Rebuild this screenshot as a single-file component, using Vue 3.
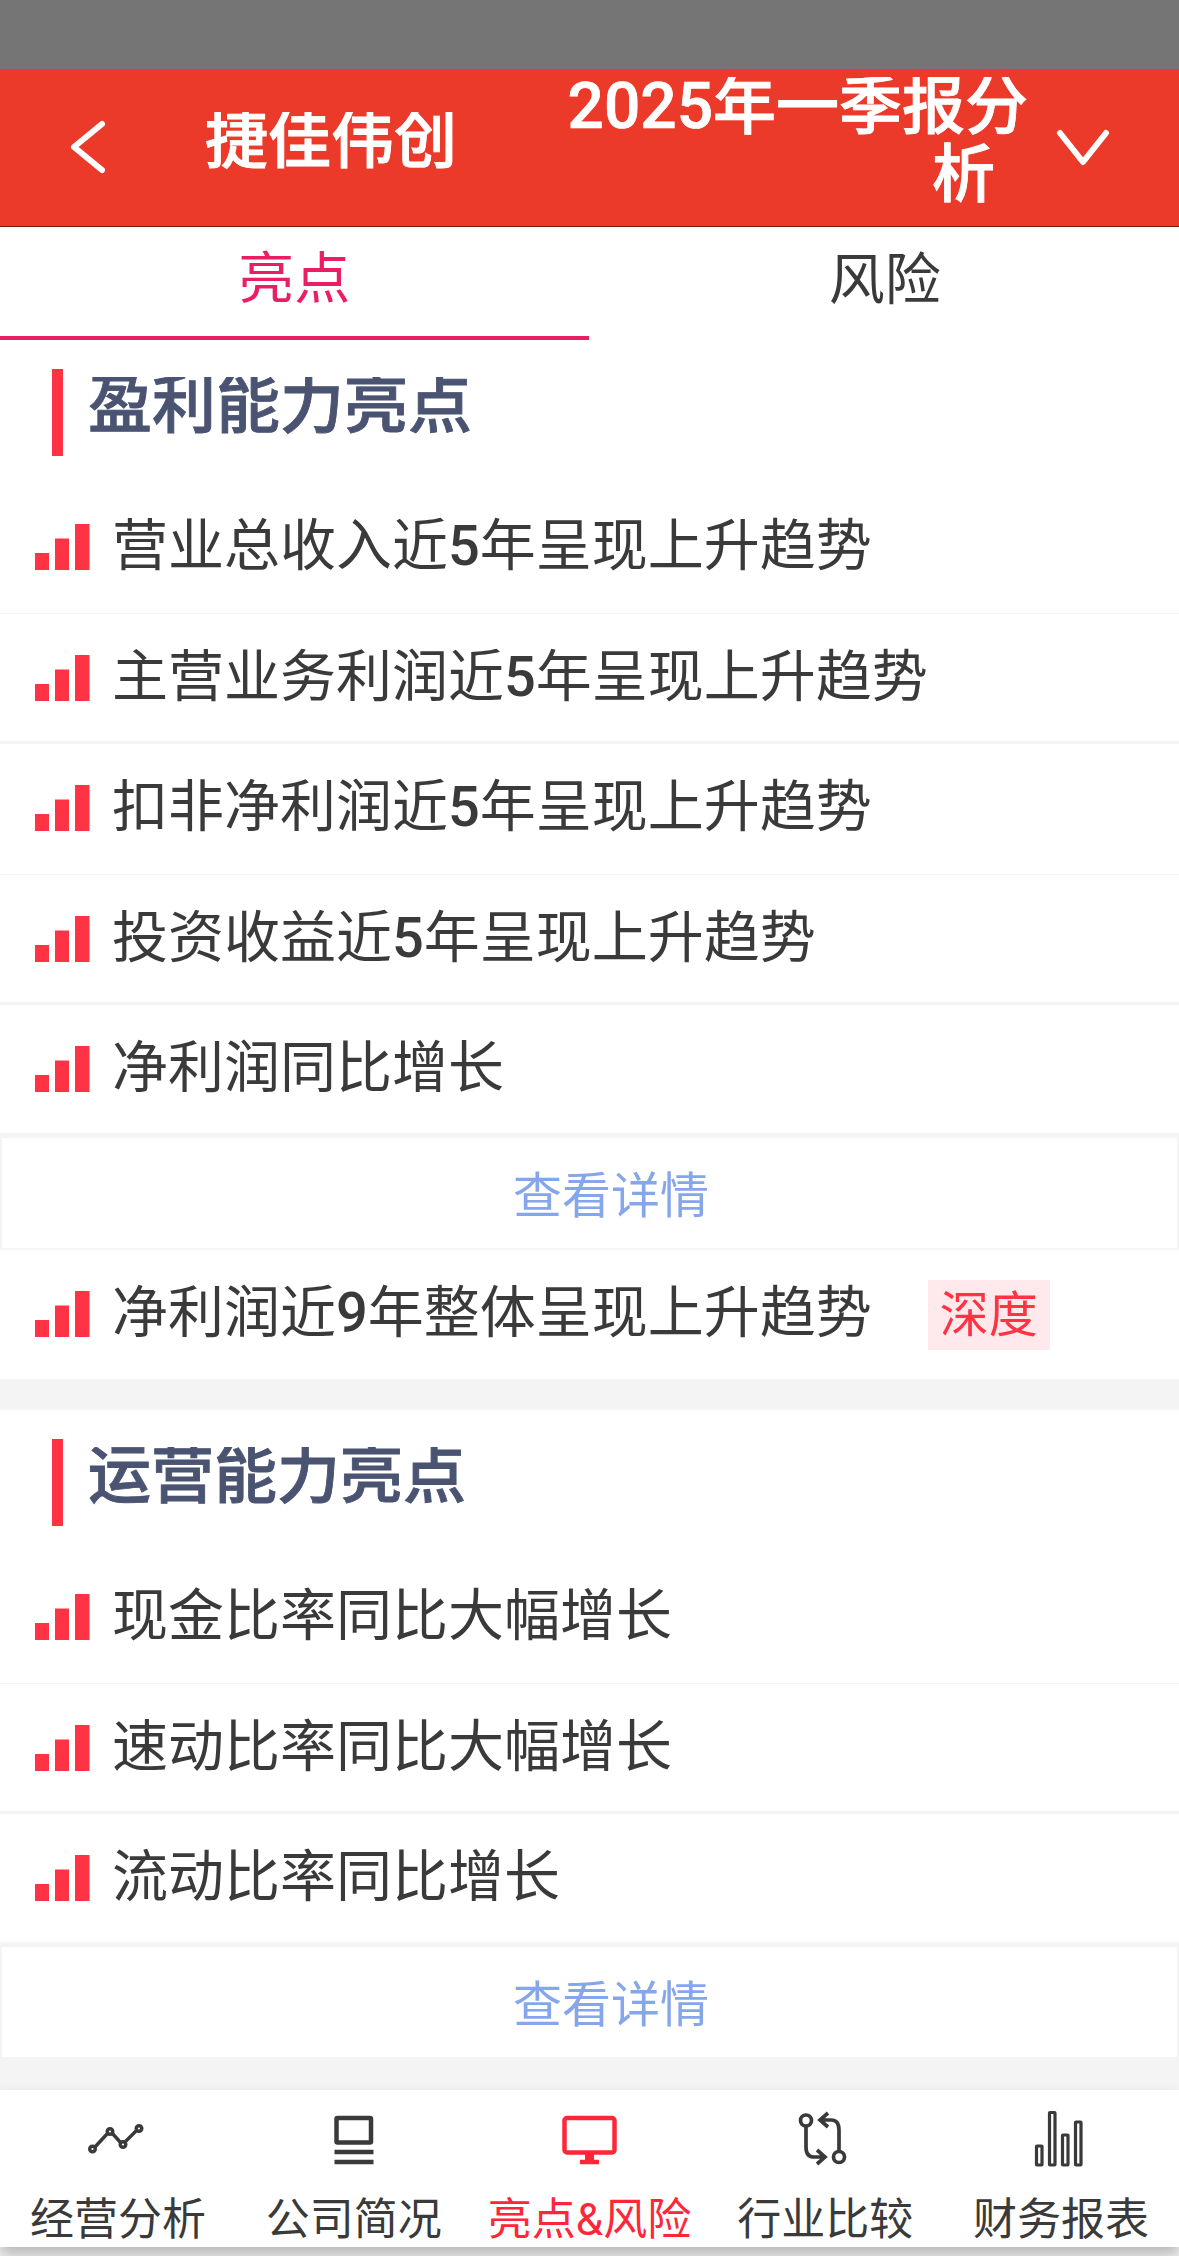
<template>
  <div class="page">
    <div class="status-bar"></div>
    <header class="header">
      <button class="icon-button back" aria-label="返回">
        <svg width="40" height="58" viewBox="0 0 40 58">
          <path d="M34 6L6 29l28 23" />
        </svg>
      </button>
      <h1 class="company heavy">捷佳伟创</h1>
      <div class="report heavy">
        <span class="report-line"
          ><span class="year">2025</span>年一季报分</span
        >
        <span class="report-line report-last">析</span>
      </div>
      <button class="icon-button expand" aria-label="展开">
        <svg width="58" height="42" viewBox="0 0 58 42">
          <path d="M6 6l23 29L52 6" />
        </svg>
      </button>
    </header>

    <nav class="tabs">
      <a
        v-for="tab in tabs"
        :key="tab"
        class="tab"
        :class="{ 'tab-active': tab === activeTab }"
        @click="activeTab = tab"
        ><span>{{ tab }}</span></a
      >
    </nav>

    <main class="content">
      <section v-for="section in sections" :key="section.title" class="section">
        <h2 class="section-title" :class="{ small: section.small }">
          <span class="heavy">{{ section.title }}</span>
        </h2>
        <div class="rows">
          <div v-for="item in section.items" :key="item" class="row">
            <svg class="bars" width="56" height="46" viewBox="0 0 56 46">
              <path d="M1 29h14v17H1zM21 14.500h14V46H21zM41 0h14.500v46H41z" />
            </svg>
            <p class="row-text">
              <span
                v-for="(part, i) in split(item)"
                :key="i"
                :class="{ digit: /\d/.test(part) }"
                >{{ part }}</span
              >
            </p>
          </div>
        </div>
        <a class="detail">查看详情</a>
        <div v-for="item in section.deep" :key="item" class="row row-deep">
          <svg class="bars" width="56" height="46" viewBox="0 0 56 46">
            <path d="M1 29h14v17H1zM21 14.500h14V46H21zM41 0h14.500v46H41z" />
          </svg>
          <p class="row-text">
            <span
              v-for="(part, i) in split(item)"
              :key="i"
              :class="{ digit: /\d/.test(part) }"
              >{{ part }}</span
            >
          </p>
          <span class="badge">深度</span>
        </div>
      </section>
    </main>

    <footer class="bottom-nav">
      <a
        v-for="link in links"
        :key="link.text"
        class="nav-link"
        :class="{ 'nav-active': link.icon === 'monitor' }"
      >
        <svg class="nav-icon" width="60" height="60" viewBox="0 0 60 60">
          <g v-if="link.icon === 'trend'" stroke-width="3.400">
            <path d="M37 32l11-11M24 23l9 10M7 37l12-13" />
            <circle cx="4.500" cy="39" r="2.800" />
            <circle cx="22" cy="21.500" r="2.800" />
            <circle cx="35" cy="34.500" r="2.800" />
            <circle cx="51" cy="18.500" r="2.800" />
          </g>
          <g v-else-if="link.icon === 'company'" stroke-width="4.500">
            <rect x="12.500" y="8" width="34.500" height="24.500" rx="1" />
            <path d="M10.500 42h39M10.500 52h39" />
          </g>
          <g v-else-if="link.icon === 'monitor'" stroke-width="4.500">
            <rect x="5.500" y="8" width="50" height="34.500" rx="2.500" />
            <path d="M21 52h19" />
            <path d="M30.500 43v8" stroke-width="9" />
          </g>
          <g v-else-if="link.icon === 'compare'" stroke-width="3.700">
            <circle cx="11" cy="10.500" r="5.500" />
            <circle cx="44" cy="47" r="5.500" />
            <path d="M11 17v20q0 10 8 10h11M22 40l8 7-8 7" />
            <path d="M44 41V20q0-10-8-10H25M33 3l-8 7 8 7" />
          </g>
          <g v-else stroke-width="3.200">
            <rect x="5.500" y="36" width="5.500" height="19" rx="0.500" />
            <rect x="18.500" y="2.500" width="5.500" height="52.500" rx="0.500" />
            <rect x="31.500" y="25" width="5.500" height="30" rx="0.500" />
            <rect x="44.500" y="12" width="5.500" height="43" rx="0.500" />
          </g>
        </svg>
        <span>{{ link.text }}</span>
      </a>
    </footer>
  </div>
</template>

<script setup>
import { ref } from "vue";

const tabs = ["亮点", "风险"];
const activeTab = ref("亮点");

const sections = ref([
  {
    title: "盈利能力亮点",
    items: [
      "营业总收入近5年呈现上升趋势",
      "主营业务利润近5年呈现上升趋势",
      "扣非净利润近5年呈现上升趋势",
      "投资收益近5年呈现上升趋势",
      "净利润同比增长",
    ],
    deep: ["净利润近9年整体呈现上升趋势"],
  },
  {
    title: "运营能力亮点",
    small: true,
    items: ["现金比率同比大幅增长", "速动比率同比大幅增长", "流动比率同比增长"],
    deep: [],
  },
]);

const links = [
  { text: "经营分析", icon: "trend" },
  { text: "公司简况", icon: "company" },
  { text: "亮点&风险", icon: "monitor" },
  { text: "行业比较", icon: "compare" },
  { text: "财务报表", icon: "chart" },
];

const split = (text) => text.split(/(\d+)/);
</script>

<style>
body {
  background: #f4f4f4;
}
</style>

<style scoped>
.page {
  display: flex;
  flex-direction: column;
  height: 2256px;
  overflow: hidden;
  background: #f4f4f4;
  color: #3a3a3a;
  font-family: Roboto, "Noto Sans CJK SC", sans-serif;
}

.heavy {
  -webkit-text-stroke: 0.9px currentColor;
}

.status-bar {
  height: 69px;
  background: #757575;
}

.header {
  display: flex;
  box-sizing: border-box;
  height: 158px;
  background: #eb3a2a;
  border-bottom: 1px solid #7d1a14;
  color: #fff;
}

.icon-button {
  padding: 0;
  border: none;
  background: none;
}

.icon-button svg {
  display: block;
  fill: none;
  stroke: #fff;
  stroke-width: 6;
  stroke-linecap: round;
  stroke-linejoin: round;
}

.back {
  margin: 49px 0 0 68px;
  align-self: flex-start;
}

.company {
  width: 252px;
  height: 63px;
  margin: 43px 0 0 97px;
  overflow: hidden;
  font-size: 63px;
  font-weight: 500;
  line-height: 58px;
  white-space: nowrap;
}

.report {
  display: flex;
  flex-direction: column;
  align-items: flex-end;
  width: 480px;
  height: 140px;
  margin: 8px 0 0 91px;
  overflow: hidden;
  font-size: 63px;
  font-weight: 500;
  line-height: 67px;
  white-space: nowrap;
}

.report-line:first-child {
  height: 64px;
  line-height: 60px;
}

.report-last {
  padding-right: 33px;
}

.year {
  font-size: 64px;
  -webkit-text-stroke-width: 0.7px;
}

.expand {
  align-self: flex-start;
  margin: 58px 0 0 26px;
}

.tabs {
  display: flex;
  height: 113px;
  background: #fff;
}

.tab {
  flex: 1;
  box-sizing: border-box;
  padding: 24px 0 0 2px;
  border-bottom: 4px solid transparent;
  font-size: 56px;
  line-height: 58px;
  text-align: center;
}

.tab-active {
  padding: 23px 0 0;
  color: #e91e63;
  border-color: #e91e63;
}

.section {
  margin-bottom: 30.500px;
  background: #fff;
}

.section-title {
  display: flex;
  box-sizing: border-box;
  height: 143px;
  margin: 0;
  padding: 29px 0 0 52px;
  color: #4a5472;
  font-size: 64px;
  font-weight: 500;
}

.section-title::before {
  content: "";
  width: 11px;
  height: 87px;
  background: #ff3344;
}

.section-title span {
  height: 64px;
  margin: 8px 0 0 25px;
  overflow: hidden;
  line-height: 57px;
}

.section-title.small {
  font-size: 63px;
}

.row {
  display: flex;
  box-sizing: border-box;
  height: 130.600px;
  padding: 41px 0 0 34px;
  border-bottom: 3px solid #f4f4f4;
}

.row:nth-child(odd) {
  border-bottom-width: 1px;
}

.row:last-child {
  border-bottom-width: 3px;
}

.row-deep:last-child {
  height: 129.500px;
  border-bottom: none;
}

.bars {
  fill: #ff3344;
}

.row-text {
  margin: -10px 0 0 22px;
  font-size: 56px;
  line-height: 64px;
  white-space: nowrap;
}

.digit {
  font-weight: 500;
}

.badge {
  width: 122px;
  height: 70px;
  margin: -11px 0 0 56px;
  background: #ffe9ec;
  color: #ff3344;
  font-size: 49px;
  line-height: 71px;
  text-align: center;
}

.detail {
  display: block;
  box-sizing: border-box;
  height: 114px;
  padding-left: 43px;
  border: 2px solid #f4f4f4;
  color: #86a6ec;
  font-size: 49px;
  line-height: 117px;
  text-align: center;
}

.bottom-nav {
  display: flex;
  height: 157px;
  margin-top: auto;
  margin-bottom: 9px;
  background: #fff;
  box-shadow: 0 8px 14px rgba(0, 0, 0, 0.25);
}

.nav-link {
  display: flex;
  flex: 1;
  flex-direction: column;
  align-items: center;
  padding-top: 20px;
  font-size: 44px;
  line-height: 50px;
}

.nav-icon {
  margin-bottom: 25px;
  fill: none;
  stroke: #3a3a3a;
}

.nav-active {
  color: #ff2638;
}

.nav-active .nav-icon {
  stroke: #ff2638;
}
</style>
